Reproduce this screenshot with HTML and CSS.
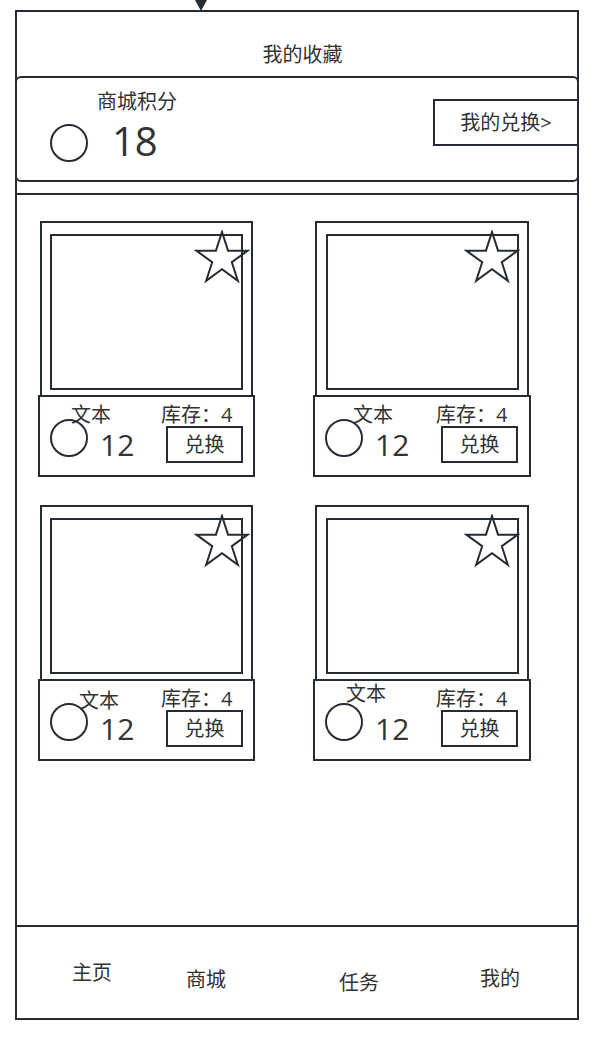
FILE: index.html
```html
<!DOCTYPE html>
<html lang="zh-CN">
<head>
<meta charset="utf-8">
<title>我的收藏</title>
<link rel="stylesheet" href="styles.css">
</head>
<body>
<div class="arrow-row">
  <svg class="arrow" viewBox="0 0 12 11"><polygon points="0,0 12,0 6,11" fill="#262c33"/></svg>
</div>
<div class="phone">
  <header class="title-bar"><h1 class="title">我的收藏</h1></header>

  <section class="points-card">
    <div class="points-info">
      <div class="points-label">商城积分</div>
      <div class="points-row">
        <span class="coin"></span>
        <span class="points-value">18</span>
      </div>
    </div>
    <div class="exchange-link">我的兑换&gt;</div>
  </section>

  <main class="goods">
    <article class="goods-card">
      <div class="goods-photo">
        <div class="goods-image"></div>
        <svg class="star" viewBox="0 0 56 54"><polygon points="28,2 34.06,20.66 53.68,20.66 37.81,32.19 43.87,50.84 28,39.31 12.13,50.84 18.19,32.19 2.32,20.66 21.94,20.66" fill="none" stroke="#262c33" stroke-width="2" stroke-linejoin="miter"/></svg>
      </div>
      <div class="goods-info">
        <div class="info-left">
          <div class="info-label info-label--a">文本</div>
          <div class="info-row"><span class="coin"></span><span class="info-price">12</span></div>
        </div>
        <div class="info-right">
          <div class="stock">库存：4</div>
          <div class="redeem">兑换</div>
        </div>
      </div>
    </article>

    <article class="goods-card goods-card--right">
      <div class="goods-photo">
        <div class="goods-image"></div>
        <svg class="star" viewBox="0 0 56 54"><polygon points="28,2 34.06,20.66 53.68,20.66 37.81,32.19 43.87,50.84 28,39.31 12.13,50.84 18.19,32.19 2.32,20.66 21.94,20.66" fill="none" stroke="#262c33" stroke-width="2" stroke-linejoin="miter"/></svg>
      </div>
      <div class="goods-info">
        <div class="info-left">
          <div class="info-label info-label--b">文本</div>
          <div class="info-row"><span class="coin"></span><span class="info-price">12</span></div>
        </div>
        <div class="info-right">
          <div class="stock">库存：4</div>
          <div class="redeem">兑换</div>
        </div>
      </div>
    </article>

    <article class="goods-card">
      <div class="goods-photo">
        <div class="goods-image"></div>
        <svg class="star" viewBox="0 0 56 54"><polygon points="28,2 34.06,20.66 53.68,20.66 37.81,32.19 43.87,50.84 28,39.31 12.13,50.84 18.19,32.19 2.32,20.66 21.94,20.66" fill="none" stroke="#262c33" stroke-width="2" stroke-linejoin="miter"/></svg>
      </div>
      <div class="goods-info">
        <div class="info-left">
          <div class="info-label info-label--c">文本</div>
          <div class="info-row"><span class="coin"></span><span class="info-price">12</span></div>
        </div>
        <div class="info-right">
          <div class="stock">库存：4</div>
          <div class="redeem">兑换</div>
        </div>
      </div>
    </article>

    <article class="goods-card goods-card--right">
      <div class="goods-photo">
        <div class="goods-image"></div>
        <svg class="star" viewBox="0 0 56 54"><polygon points="28,2 34.06,20.66 53.68,20.66 37.81,32.19 43.87,50.84 28,39.31 12.13,50.84 18.19,32.19 2.32,20.66 21.94,20.66" fill="none" stroke="#262c33" stroke-width="2" stroke-linejoin="miter"/></svg>
      </div>
      <div class="goods-info">
        <div class="info-left">
          <div class="info-label info-label--d">文本</div>
          <div class="info-row"><span class="coin"></span><span class="info-price">12</span></div>
        </div>
        <div class="info-right">
          <div class="stock">库存：4</div>
          <div class="redeem">兑换</div>
        </div>
      </div>
    </article>
  </main>

  <nav class="tab-bar">
    <span class="tab tab--home">主页</span>
    <span class="tab tab--mall">商城</span>
    <span class="tab tab--task">任务</span>
    <span class="tab tab--mine">我的</span>
  </nav>
</div>
</body>
</html>
```

FILE: styles.css
```css
* {
  box-sizing: border-box;
}

body {
  margin: 0;
  background: #ffffff;
  color: #333333;
  font-family: "Open Sans", "Noto Sans CJK SC", sans-serif;
}

.arrow-row {
  height: 10px;
  padding-left: 195px;
}

.arrow {
  display: block;
  width: 12px;
  height: 11px;
}

.phone {
  margin-left: 15px;
  width: 564px;
  height: 1010px;
  border: 2px solid #262c33;
  display: flex;
  flex-direction: column;
}

/* title */
.title-bar {
  height: 64px;
  flex: none;
  padding: 33px 0 0 11px;
  text-align: center;
}

.title {
  margin: 0;
  font-size: 20px;
  font-weight: 400;
  line-height: 20px;
}

/* points card */
.points-card {
  height: 106px;
  flex: none;
  margin: 0 -2px 11px;
  border: 2px solid #262c33;
  border-radius: 6px;
  display: flex;
  justify-content: space-between;
  align-items: flex-start;
}

.points-info {
  padding-top: 14px;
}

.points-label {
  padding-left: 80px;
  font-size: 20px;
  line-height: 20px;
  white-space: nowrap;
}

.points-row {
  display: flex;
  align-items: flex-start;
  margin-top: 12px;
  padding-left: 33px;
}

.coin {
  display: block;
  flex: none;
  width: 38px;
  height: 38px;
  border: 2px solid #262c33;
  border-radius: 50%;
}

.points-value {
  margin: -3px 0 0 24px;
  font-size: 40px;
  line-height: 40px;
}

.exchange-link {
  margin: 21px -2px 0 0;
  width: 146px;
  height: 47px;
  border: 2px solid #262c33;
  background: #ffffff;
  display: flex;
  align-items: center;
  justify-content: center;
  font-size: 20px;
  line-height: 20px;
  white-space: nowrap;
}

/* goods */
.goods {
  flex: 1;
  border-top: 2px solid #262c33;
  display: grid;
  grid-template-columns: 213px 214px;
  align-content: start;
  column-gap: 62px;
  row-gap: 28px;
  padding: 26px 0 0 23px;
}

.goods-card {
  display: flex;
  flex-direction: column;
}

.goods-photo {
  position: relative;
  height: 176px;
  border: 2px solid #262c33;
  padding: 11px 8px 0 8px;
}

.goods-image {
  height: 156px;
  border: 2px solid #262c33;
}

.star {
  position: absolute;
  top: 7px;
  right: 1px;
  width: 56px;
  height: 54px;
}

.goods-card--right .star {
  right: 7px;
}

.goods-card--right .goods-image {
  margin-left: 1px;
}

.goods-info {
  width: calc(100% + 4px);
  height: 82px;
  margin: -2px 0 0 -2px;
  border: 2px solid #262c33;
  display: flex;
  align-items: flex-start;
}

.info-left {
  width: 120px;
  flex: none;
  display: flex;
  flex-direction: column;
}

.info-label {
  height: 20px;
  margin-top: 8px;
  font-size: 20px;
  line-height: 20px;
  white-space: nowrap;
}

.info-label--a {
  margin-left: 31px;
}

.info-label--b {
  margin-left: 38px;
}

.info-label--c {
  margin-left: 39px;
  margin-top: 10px;
  margin-bottom: -2px;
}

.info-label--d {
  margin-left: 31px;
  margin-top: 3px;
  margin-bottom: 5px;
}

.info-row {
  display: flex;
  align-items: flex-start;
  margin-top: -6px;
  padding-left: 10px;
}

.info-price {
  margin: 11px 0 0 12px;
  font-size: 30px;
  line-height: 30px;
}

.info-right {
  margin-left: 1px;
  padding-top: 8px;
  display: flex;
  flex-direction: column;
  align-items: flex-start;
}

.stock {
  font-size: 20px;
  line-height: 20px;
  white-space: nowrap;
}

.redeem {
  margin: 1px 0 0 5px;
  width: 77px;
  height: 37px;
  border: 2px solid #262c33;
  display: flex;
  align-items: center;
  justify-content: center;
  font-size: 20px;
  line-height: 20px;
}

/* tab bar */
.tab-bar {
  height: 93px;
  flex: none;
  border-top: 2px solid #262c33;
  display: flex;
  align-items: flex-start;
  padding-left: 55px;
}

.tab {
  font-size: 20px;
  line-height: 20px;
  white-space: nowrap;
}

.tab--home {
  margin-top: 36px;
}

.tab--mall {
  margin-left: 74px;
  margin-top: 43px;
}

.tab--task {
  margin-left: 113px;
  margin-top: 46px;
}

.tab--mine {
  margin-left: 101px;
  margin-top: 42px;
}
```
